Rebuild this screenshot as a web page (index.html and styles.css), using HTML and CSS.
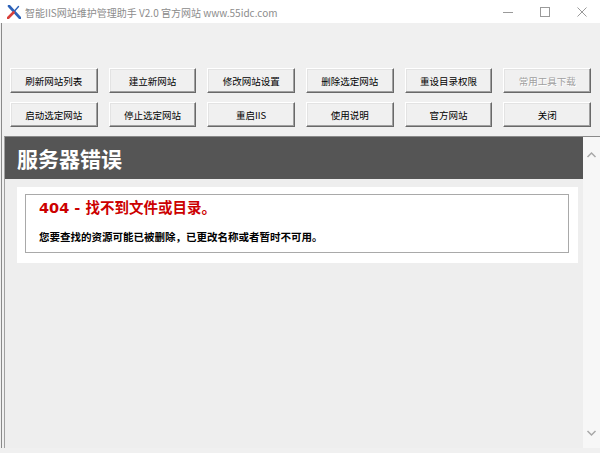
FILE: index.html
```html
<!DOCTYPE html>
<html lang="zh-CN">
<head>
    <meta charset="UTF-8">
    <title>智能IIS网站维护管理助手</title>
    <link rel="stylesheet" href="styles.css">
</head>
<body>

<div class="titlebar">
    <svg class="app-icon" width="14" height="14" viewBox="0 0 14 14">
        <path d="M2 1 L13 13" stroke="#2d62b8" stroke-width="2.6" stroke-linecap="round"/>
        <path d="M11.5 1.5 L8 5.5" stroke="#2d62b8" stroke-width="1.4" stroke-linecap="round"/>
        <path d="M6.5 7.5 L1 13" stroke="#d8403a" stroke-width="2.6" stroke-linecap="round"/>
    </svg>
    <div class="title-text">智能IIS网站维护管理助手 V2.0 官方网站 www.55idc.com</div>
    <div class="win-controls">
        <svg width="12" height="12" viewBox="0 0 12 12"><path d="M1 6.5 H11" stroke="#9a9a9a" stroke-width="1"/></svg>
        <svg width="12" height="12" viewBox="0 0 12 12"><rect x="1.5" y="1.5" width="9" height="9" fill="none" stroke="#9a9a9a" stroke-width="1"/></svg>
        <svg width="12" height="12" viewBox="0 0 12 12"><path d="M1.5 1.5 L10.5 10.5 M10.5 1.5 L1.5 10.5" stroke="#9a9a9a" stroke-width="1"/></svg>
    </div>
</div>

<div class="client">
    <div class="toolbar">
        <button>刷新网站列表</button>
        <button>建立新网站</button>
        <button>修改网站设置</button>
        <button>删除选定网站</button>
        <button>重设目录权限</button>
        <button class="disabled">常用工具下载</button>
        <button>启动选定网站</button>
        <button>停止选定网站</button>
        <button>重启IIS</button>
        <button>使用说明</button>
        <button>官方网站</button>
        <button>关闭</button>
    </div>

    <div class="webview">
        <div class="page">
            <div class="page-header">服务器错误</div>
            <div class="content-container">
                <div class="fieldset">
                    <h2>404 - 找不到文件或目录。</h2>
                    <h3>您要查找的资源可能已被删除，已更改名称或者暂时不可用。</h3>
                </div>
            </div>
        </div>
        <div class="scrollbar">
            <svg width="17" height="10" viewBox="0 0 17 10"><path d="M4.5 7 L8.5 3 L12.5 7" fill="none" stroke="#a8a8a8" stroke-width="1.5"/></svg>
            <svg width="17" height="10" viewBox="0 0 17 10"><path d="M4.5 3 L8.5 7 L12.5 3" fill="none" stroke="#a8a8a8" stroke-width="1.5"/></svg>
        </div>
    </div>
</div>

</body>
</html>
```

FILE: styles.css
```css
body {
    margin: 0;
    width: 600px;
    height: 453px;
    overflow: hidden;
    background-color: #f0f0f0;
    font-family: "Noto Sans CJK SC", "Liberation Sans", sans-serif;
}
.titlebar {
    height: 23px;
    background-color: #fff;
    display: flex;
    align-items: center;
}
.app-icon {
    margin-left: 7px;
    margin-right: 4px;
}
.title-text {
    font-size: 10px;
    color: #8c8c8c;
    flex: 1;
    padding-top: 1px;
}
.win-controls {
    display: flex;
    gap: 25px;
    padding-right: 12px;
}
.client {
    box-shadow: inset 1px 0 #f0f0f0, inset 2px 0 #8a8a8a;
    padding-left: 4px;
}
.toolbar {
    display: grid;
    grid-template-columns: repeat(6, 1fr);
    column-gap: 11px;
    row-gap: 9px;
    grid-auto-rows: 25px;
    padding: 45px 9px 0 6px;
}
.toolbar button {
    font-family: "Noto Sans CJK SC", "Liberation Sans", sans-serif;
    font-size: 9.5px;
    color: #000;
    background-color: #f0f0f0;
    border: 1px solid;
    border-color: #fff #696969 #696969 #fff;
    box-shadow: inset -1px -1px #a0a0a0, inset 1px 1px #e3e3e3;
    padding: 0;
}
.toolbar button.disabled {
    color: #a0a0a0;
    text-shadow: 1px 1px #fff;
}
.webview {
    margin-top: 9px;
    height: 311px;
    border-top: 1px solid #8a8a8a;
    border-left: 1px solid #a0a0a0;
    display: flex;
}
.page {
    flex: 1;
    background-color: #eeeeee;
}
.page-header {
    height: 42px;
    line-height: 42px;
    background-color: #555555;
    color: #fff;
    font-size: 21px;
    font-weight: bold;
    padding-left: 12px;
}
.content-container {
    background-color: #fff;
    margin: 8px 0 0 12px;
    width: 544px;
    padding: 7px 9px 10px 8px;
}
.fieldset {
    border: 1px solid #a9a9a9;
    padding: 3px 13px 8px 13px;
}
.fieldset h2 {
    margin: 0;
    font-family: "DejaVu Sans", "Noto Sans CJK SC", sans-serif;
    font-size: 14.5px;
    line-height: 20px;
    font-weight: bold;
    color: #cc0000;
}
.fieldset h3 {
    margin: 12px 0 0 0;
    font-size: 10.5px;
    line-height: 14px;
    font-weight: bold;
    color: #000;
}
.scrollbar {
    width: 17px;
    background-color: #f7f7f7;
    display: flex;
    flex-direction: column;
    justify-content: space-between;
    padding: 13px 0 10px 0;
}
```
